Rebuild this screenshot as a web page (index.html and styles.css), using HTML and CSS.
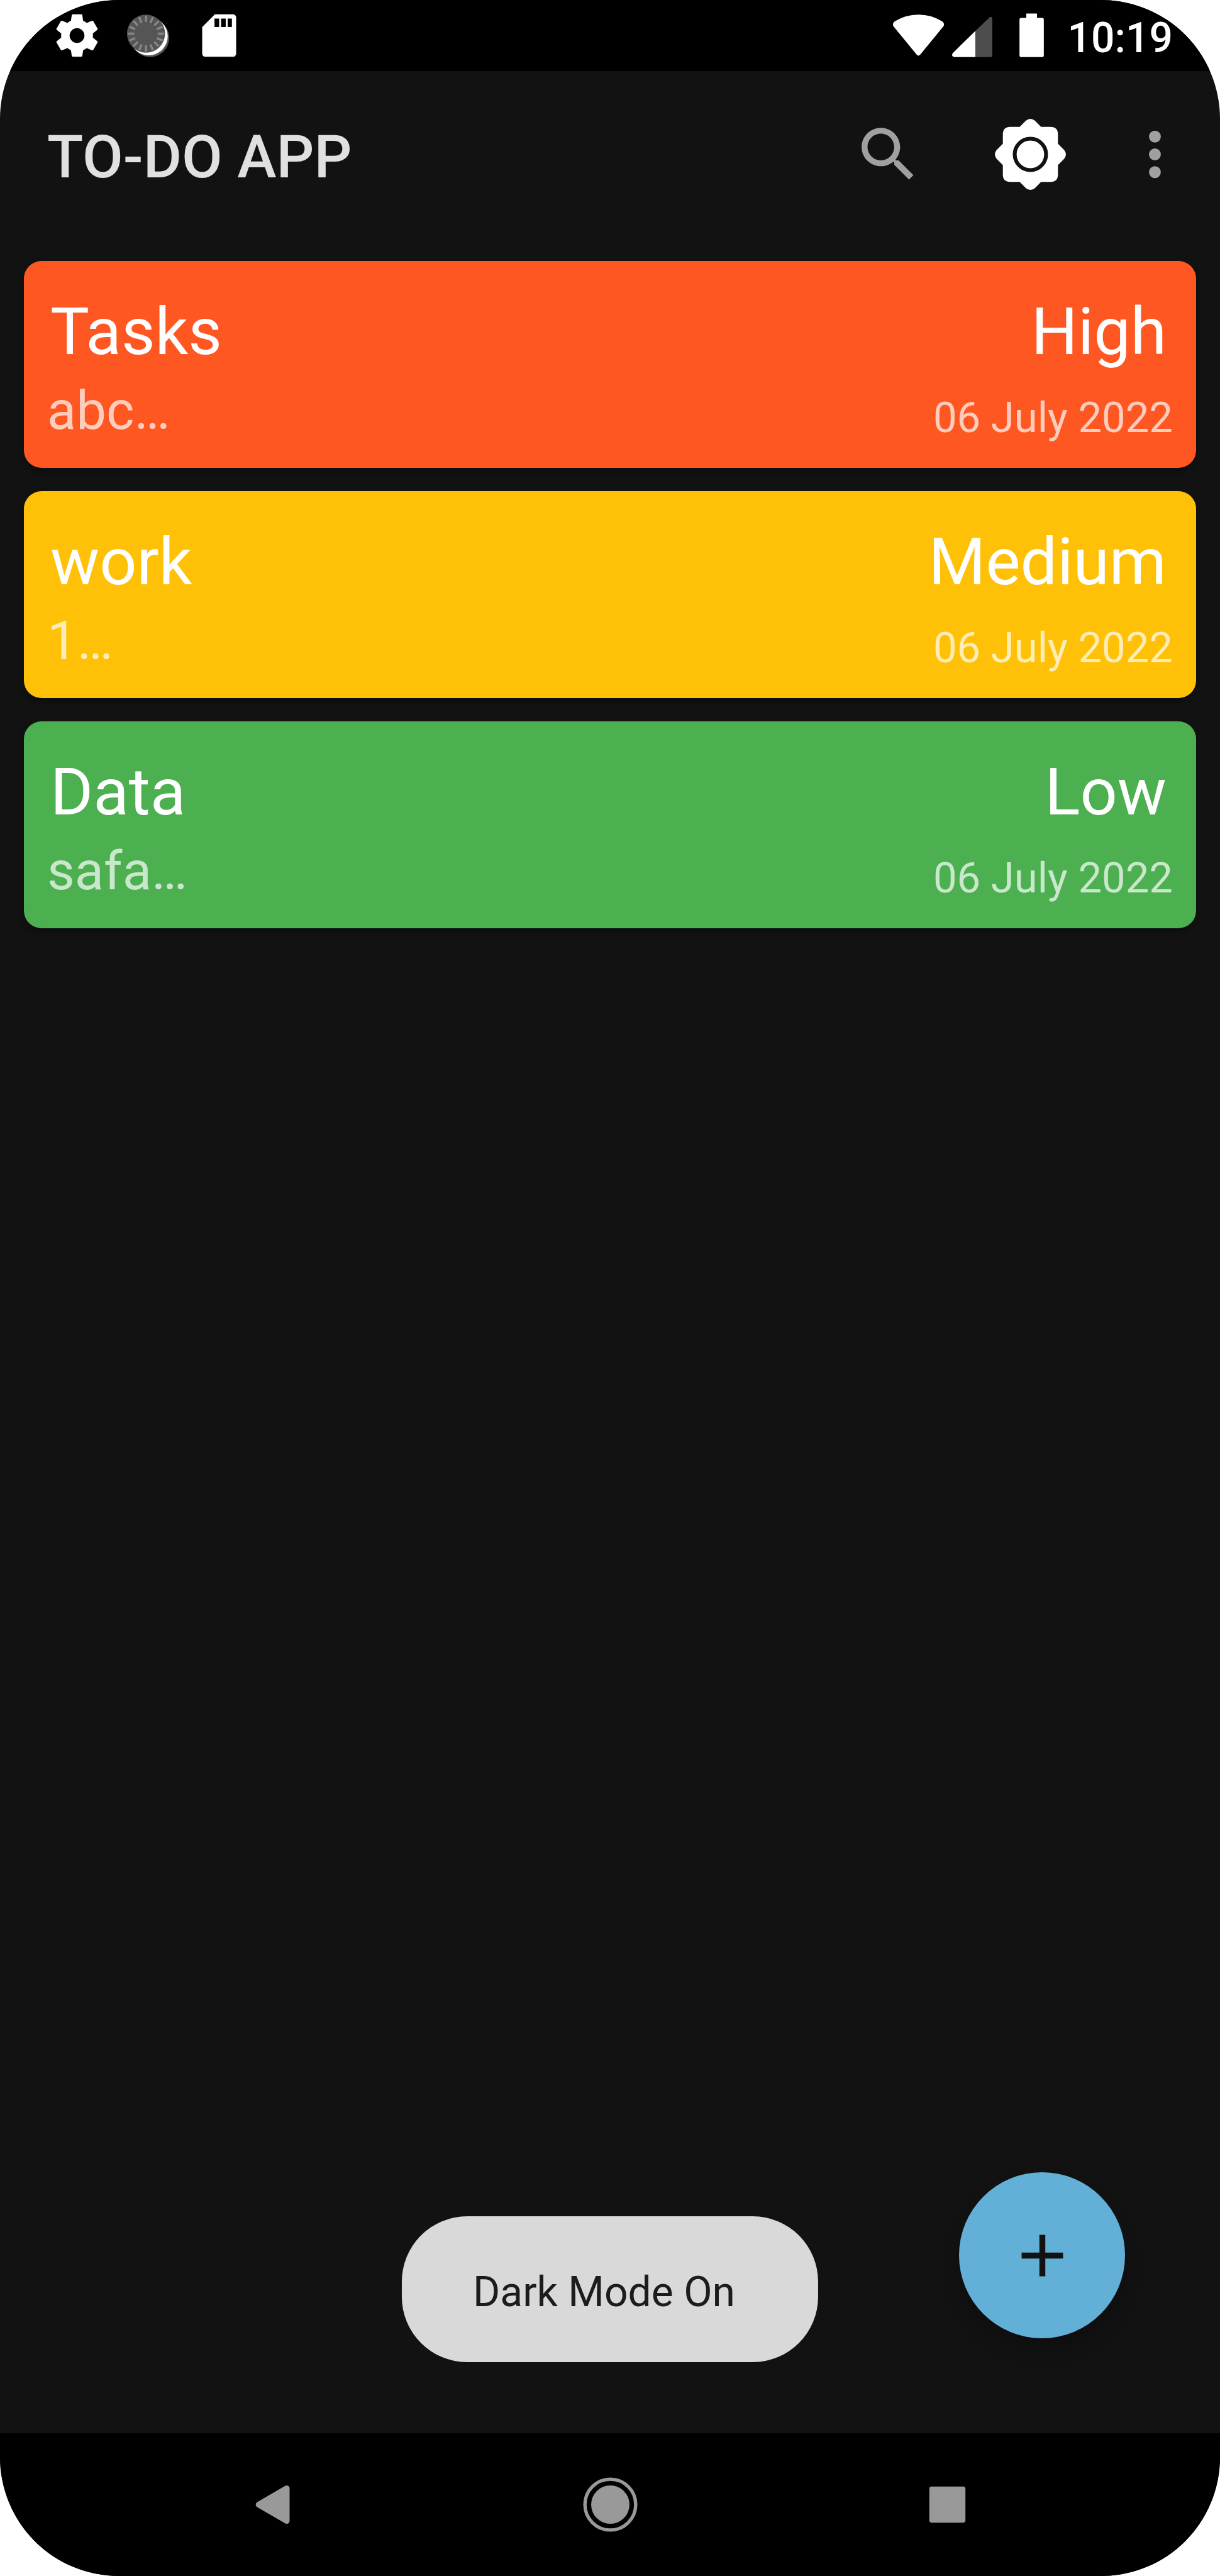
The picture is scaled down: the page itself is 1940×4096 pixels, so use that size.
FILE: index.html
```html
<!DOCTYPE html>
<html lang="en">
<head>
<meta charset="utf-8">
<meta name="viewport" content="width=device-width, initial-scale=1">
<title>TO-DO APP</title>
<link rel="stylesheet" href="styles.css">
</head>
<body>
<div class="screen">
  <div class="status-bar">
    <div class="notifications">
      <svg class="status-icon" viewBox="0 0 24 24" aria-hidden="true"><path fill="#fff" d="M19.43 12.98c.04-.32.07-.64.07-.98s-.03-.66-.07-.98l2.11-1.65c.19-.15.24-.42.12-.64l-2-3.46c-.12-.22-.39-.3-.61-.22l-2.49 1c-.52-.4-1.08-.73-1.69-.98l-.38-2.65C14.46 2.18 14.25 2 14 2h-4c-.25 0-.46.18-.49.42l-.38 2.65c-.61.25-1.17.59-1.69.98l-2.49-1c-.23-.09-.49 0-.61.22l-2 3.46c-.13.22-.07.49.12.64l2.11 1.65c-.04.32-.07.65-.07.98s.03.66.07.98l-2.11 1.65c-.19.15-.24.42-.12.64l2 3.46c.12.22.39.3.61.22l2.49-1c.52.4 1.08.73 1.69.98l.38 2.65c.03.24.24.42.49.42h4c.25 0 .46-.18.49-.42l.38-2.65c.61-.25 1.17-.59 1.69-.98l2.49 1c.23.09.49 0 .61-.22l2-3.46c.12-.22.07-.49-.12-.64l-2.11-1.65zM12 15.5c-1.93 0-3.5-1.57-3.5-3.5s1.57-3.5 3.5-3.5 3.5 1.57 3.5 3.5-1.57 3.5-3.5 3.5z"/></svg>
      <svg class="status-icon" viewBox="413 24 270 270" aria-hidden="true">
        <circle cx="559" cy="172" r="101" fill="#555"/>
        <circle cx="551" cy="163" r="101" fill="#fff"/>
        <circle cx="537" cy="149" r="101" fill="#555"/>
        <g stroke="#888" stroke-width="11">
          <path id="tick" d="M599 149h33M442 149h33M537 54v33M537 211v33"/>
          <use href="#tick" transform="rotate(22.5 537 149)"/>
          <use href="#tick" transform="rotate(45 537 149)"/>
          <use href="#tick" transform="rotate(67.5 537 149)"/>
        </g>
      </svg>
      <svg class="status-icon" viewBox="0 0 24 24" aria-hidden="true"><path fill="#fff" d="M18.5 2H10L4 8v12.5c0 .83.67 1.5 1.5 1.5h13c.83 0 1.5-.67 1.5-1.5v-17c0-.83-.67-1.5-1.5-1.5zM12 8H9.8V4H12zm3.1 0h-2.2V4h2.2zm2.9 0h-2V4h2z"/></svg>
    </div>
    <div class="system">
      <svg class="wifi" viewBox="1581 18 90 90" aria-hidden="true"><path fill="#fff" d="M1582 47Q1579 42 1584 38Q1603 26 1626 26T1668 38Q1673 42 1670 47L1629 97Q1626 100 1623 97Z"/></svg>
      <svg class="signal" viewBox="1686 18 71 90" aria-hidden="true"><path fill="#4d4d4d" d="M1727 55L1752 31Q1757 28 1757 34V98Q1757 101 1754 101H1727Z"/><path fill="#fff" d="M1727 55V101H1690Q1684 100 1687 94Z"/></svg>
      <svg class="battery" viewBox="1805 18 43 90" aria-hidden="true"><path fill="#fff" d="M1817 24h19v8h9q3 0 3 3v63q0 3-3 3h-37q-3 0-3-3V35q0-3 3-3h9z"/></svg>
      <time class="clock">10:19</time>
    </div>
  </div>

  <header class="app-bar">
    <h1 class="app-title">TO-DO APP</h1>
    <div class="actions">
      <button class="icon-button search" type="button" aria-label="Search"><svg viewBox="0 0 24 24"><path d="M15.5 14h-.79l-.28-.27C15.41 12.59 16 11.11 16 9.5 16 5.91 13.09 3 9.5 3S3 5.91 3 9.5 5.91 16 9.5 16c1.61 0 3.09-.59 4.23-1.57l.27.28v.79l5 4.99L20.49 19l-4.99-5zm-6 0C7.01 14 5 11.99 5 9.5S7.01 5 9.5 5 14 7.01 14 9.5 11.99 14 9.5 14z"/></svg></button>
      <button class="icon-button theme" type="button" aria-label="Toggle dark mode"><svg viewBox="0 0 24 24"><path d="M8.4 2.7L10.5.6Q12-.6 13.5.6L15.6 2.7H18.8Q21.3 2.7 21.3 5.2V8.4L23.4 10.5Q24.6 12 23.4 13.5L21.3 15.6V18.8Q21.3 21.3 18.8 21.3H15.6L13.5 23.4Q12 24.6 10.5 23.4L8.4 21.3H5.2Q2.7 21.3 2.7 18.8V15.6L.6 13.5Q-.6 12 .6 10.5L2.7 8.4V5.2Q2.7 2.7 5.2 2.7Z"/><circle cx="12" cy="12" r="5.3" fill="none" stroke="#121212" stroke-width="1.3"/></svg></button>
      <button class="icon-button more" type="button" aria-label="More options"><svg viewBox="0 0 24 24"><circle cx="12" cy="6" r="2"/><circle cx="12" cy="12" r="2"/><circle cx="12" cy="18" r="2"/></svg></button>
    </div>
  </header>

  <main class="content">
    <ul class="tasks">
      <li class="task high">
        <div class="task-main"><h2 class="task-heading">Tasks</h2><p class="task-note">abc…</p></div>
        <div class="task-meta"><p class="task-heading">High</p><p class="task-date">06 July 2022</p></div>
      </li>
      <li class="task medium">
        <div class="task-main"><h2 class="task-heading">work</h2><p class="task-note">1…</p></div>
        <div class="task-meta"><p class="task-heading">Medium</p><p class="task-date">06 July 2022</p></div>
      </li>
      <li class="task low">
        <div class="task-main"><h2 class="task-heading">Data</h2><p class="task-note">safa…</p></div>
        <div class="task-meta"><p class="task-heading">Low</p><p class="task-date">06 July 2022</p></div>
      </li>
    </ul>
    <div class="toast" role="status">Dark Mode On</div>
    <button class="fab" type="button" aria-label="Add task"><svg viewBox="0 0 24 24"><path d="M19 13h-6v6h-2v-6H5v-2h6V5h2v6h6z"/></svg></button>
  </main>

  <nav class="nav-bar">
    <button class="nav-button" type="button" aria-label="Back"><svg viewBox="-63 -63 126 126"><path stroke="#999" stroke-width="10" stroke-linejoin="round" d="M-26 0L24 -29V29Z"/></svg></button>
    <button class="nav-button" type="button" aria-label="Home"><svg viewBox="-63 -63 126 126"><circle r="34"/><circle r="45" fill="none" stroke="#999" stroke-width="6"/></svg></button>
    <button class="nav-button" type="button" aria-label="Recent apps"><svg viewBox="-63 -63 126 126"><rect x="-32" y="-32" width="64" height="64" rx="4"/></svg></button>
  </nav>
</div>
</body>
</html>
```
FILE: styles.css
```css
* {
  box-sizing: border-box;
}

body {
  margin: 0;
  background: #fff;
  font-family: Roboto, "Noto Sans", sans-serif;
}

h1, h2, p, ul {
  margin: 0;
  padding: 0;
}

button {
  margin: 0;
  padding: 0;
  border: 0;
  background: none;
  cursor: pointer;
}

svg {
  display: block;
}

.screen {
  display: flex;
  flex-direction: column;
  min-height: 100vh;
  overflow: hidden;
  border-radius: 189px;
  background: #121212;
}

/* Status bar */

.status-bar {
  display: flex;
  align-items: center;
  justify-content: space-between;
  height: 113px;
  padding: 0 75px 0 82px;
  background: #000;
}

.notifications {
  display: flex;
  gap: 32px;
}

.status-icon,
.wifi {
  width: 81px;
  height: 81px;
}

.system {
  display: flex;
  align-items: center;
}

.signal {
  width: 64px;
  height: 81px;
  margin-left: 13px;
}

.battery {
  width: 39px;
  height: 81px;
  margin: 0 38px 0 43px;
}

.clock {
  padding-top: 7px;
  color: #fff;
  font-size: 66px;
  font-weight: 500;
  line-height: 77px;
}

/* App bar */

.app-bar {
  display: flex;
  align-items: center;
  justify-content: space-between;
  height: 264px;
  padding: 0 47px 0 75px;
}

.app-title {
  padding-top: 10px;
  color: #e0e0e0;
  font-size: 94px;
  font-weight: 500;
  line-height: 110px;
}

.actions {
  display: flex;
}

.icon-button {
  width: 113px;
  height: 113px;
  fill: #a0a0a0;
}

.theme {
  margin: 0 85px 0 113px;
  fill: #fff;
}

/* Task list */

.content {
  position: relative;
  flex: 1;
  padding: 38px;
}

.tasks {
  display: grid;
  gap: 37px;
  list-style: none;
}

.task {
  display: flex;
  justify-content: space-between;
  padding: 52px 37px 41px;
  border-radius: 28px;
  box-shadow: 0 5px 10px rgba(0, 0, 0, 0.3);
  color: #fff;
}

.high {
  background: #ff5722;
}

.medium {
  background: #ffc107;
}

.low {
  background: #4caf50;
}

.task-main,
.task-meta {
  display: flex;
  flex-direction: column;
}

.task-main {
  gap: 14px;
}

.task-meta {
  gap: 37px;
  text-align: right;
}

.task-heading {
  padding: 0 10px 0 5px;
  font-size: 104px;
  font-weight: 400;
  line-height: 122px;
}

.task-note {
  color: rgba(255, 255, 255, 0.7);
  font-size: 85px;
  line-height: 100px;
}

.task-date {
  color: rgba(255, 255, 255, 0.7);
  font-size: 67px;
  line-height: 77px;
}

/* Floating elements */

.toast {
  position: absolute;
  bottom: 113px;
  left: 50%;
  padding: 82px 132px 73px 113px;
  border-radius: 104px;
  background: #d9d9d9;
  color: #1c1c1c;
  font-size: 66px;
  line-height: 77px;
  white-space: nowrap;
  transform: translateX(-50%);
}

.fab {
  position: absolute;
  right: 151px;
  bottom: 151px;
  display: grid;
  place-items: center;
  width: 264px;
  height: 264px;
  border-radius: 50%;
  background: #62afd7;
  box-shadow: 0 20px 30px rgba(0, 0, 0, 0.2);
  fill: #121212;
}

.fab svg {
  width: 113px;
  height: 113px;
}

/* Navigation bar */

.nav-bar {
  display: grid;
  grid-template-columns: repeat(3, 1fr);
  height: 227px;
  padding: 0 166px;
  background: #000;
}

.nav-button {
  display: grid;
  place-items: center;
  fill: #999;
}

.nav-button svg {
  width: 113px;
  height: 113px;
}
```
